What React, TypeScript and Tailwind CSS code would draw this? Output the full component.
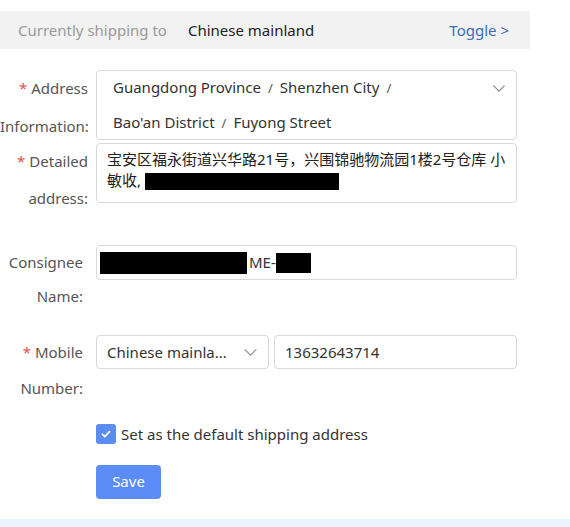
import React from 'react';

const font = { fontFamily: '"Noto Sans", "Noto Sans CJK SC", sans-serif' };

const Chevron = ({ className }: { className?: string }) => (
  <svg className={className} viewBox="0 0 16 10" fill="none" stroke="currentColor" strokeWidth="1.4" strokeLinecap="round" strokeLinejoin="round">
    <path d="M2 2l6 6 6-6" />
  </svg>
);

const Label = ({ req, l1, l2, w, lh }: { req?: boolean; l1: string; l2: string; w: string; lh: string }) => (
  <div className={`${w} ${lh} shrink-0 text-right text-[15px] text-[#555] whitespace-nowrap`}>
    <div>
      {req && <span className="text-[#e0524a] mr-1">*</span>}
      {l1}
    </div>
    <div>{l2}</div>
  </div>
);

const Slash = () => <span className="text-[#555] text-[13px] mx-[7px]">/</span>;

export default function App() {
  return (
    <div className="w-[570px] h-[527px] bg-white relative overflow-hidden text-[#333]" style={font}>
      <div className="pt-[11px]">
        <div className="w-[530px] h-[38px] bg-[#f2f2f2] flex items-center px-[18px] text-[15px]">
          <span className="text-[#999]">Currently shipping to</span>
          <span className="ml-[21px] text-[#222]">Chinese mainland</span>
          <span className="ml-auto mr-[3px] text-[#3a6db3]">Toggle &gt;</span>
        </div>
      </div>

      <div className="mt-[20px] flex gap-[8px]">
        <Label req l1="Address" l2="Information:" w="w-[88px]" lh="leading-[38px]" />
        <div className="mt-[1px] w-[421px] h-[70px] border border-[#d9d9d9] rounded-[4px] flex pl-[16px] pr-[10px]">
          <div className="flex-1 text-[15px] leading-[34px] -mt-[1px]">
            <div>
              Guangdong Province<Slash />Shenzhen City<Slash />
            </div>
            <div>
              Bao'an District<Slash />Fuyong Street
            </div>
          </div>
          <Chevron className="w-[14px] h-[9px] text-[#888] mt-[13px]" />
        </div>
      </div>

      <div className="-mt-[2px] flex gap-[8px]">
        <Label req l1="Detailed" l2="address:" w="w-[88px]" lh="leading-[37px]" />
        <div className="w-[421px] h-[60px] border border-[#d9d9d9] rounded-[4px] pl-[10px] pr-[8px] pt-[5px] text-[15px] leading-[21px] text-[#222]">
          宝安区福永街道兴华路21号，兴围锦驰物流园1楼2号仓库 小敏收,{' '}
          <span className="inline-block align-middle w-[194px] h-[17px] bg-black" />
        </div>
      </div>

      <div className="mt-[28px] flex gap-[13px]">
        <Label l1="Consignee" l2="Name:" w="w-[83px]" lh="leading-[34px]" />
        <div className="w-[421px] h-[35px] border border-[#d9d9d9] rounded-[4px] flex items-center pl-[3px] text-[15px] text-[#333]">
          <span className="w-[147px] h-[22px] bg-black" />
          <span className="ml-[2px]">ME-</span>
          <span className="w-[35px] h-[20px] bg-black" />
        </div>
      </div>

      <div className="mt-[21px] flex gap-[13px]">
        <Label req l1="Mobile" l2="Number:" w="w-[83px]" lh="leading-[36px]" />
        <div className="mt-[1px] flex gap-[5px]">
          <div className="w-[173px] h-[34px] border border-[#d9d9d9] rounded-[4px] flex items-center pl-[10px] pr-[10px] text-[15px] text-[#333]">
            <span className="flex-1">Chinese mainla...</span>
            <Chevron className="w-[15px] h-[9px] text-[#999]" />
          </div>
          <div className="w-[243px] h-[34px] border border-[#d9d9d9] rounded-[4px] flex items-center pl-[10px] text-[15px] text-[#333]">
            13632643714
          </div>
        </div>
      </div>

      <div className="mt-[17px] ml-[96px] flex items-center gap-[5px]">
        <span className="w-[20px] h-[20px] rounded-[3px] bg-[#5b8cf0] flex items-center justify-center">
          <svg viewBox="0 0 12 12" className="w-[12px] h-[12px]" fill="none" stroke="white" strokeWidth="1.8" strokeLinecap="round" strokeLinejoin="round">
            <path d="M2.5 6.3l2.3 2.3 4.7-5" />
          </svg>
        </span>
        <span className="text-[15px] text-[#333]">Set as the default shipping address</span>
      </div>

      <div className="mt-[19px] ml-[96px]">
        <button className="w-[65px] h-[34px] rounded-[4px] bg-[#5b8cf7] text-white text-[15px]">Save</button>
      </div>

      <div className="absolute left-0 right-0 bottom-0 h-[8px] bg-[#eaf4fe]" />
    </div>
  );
}
